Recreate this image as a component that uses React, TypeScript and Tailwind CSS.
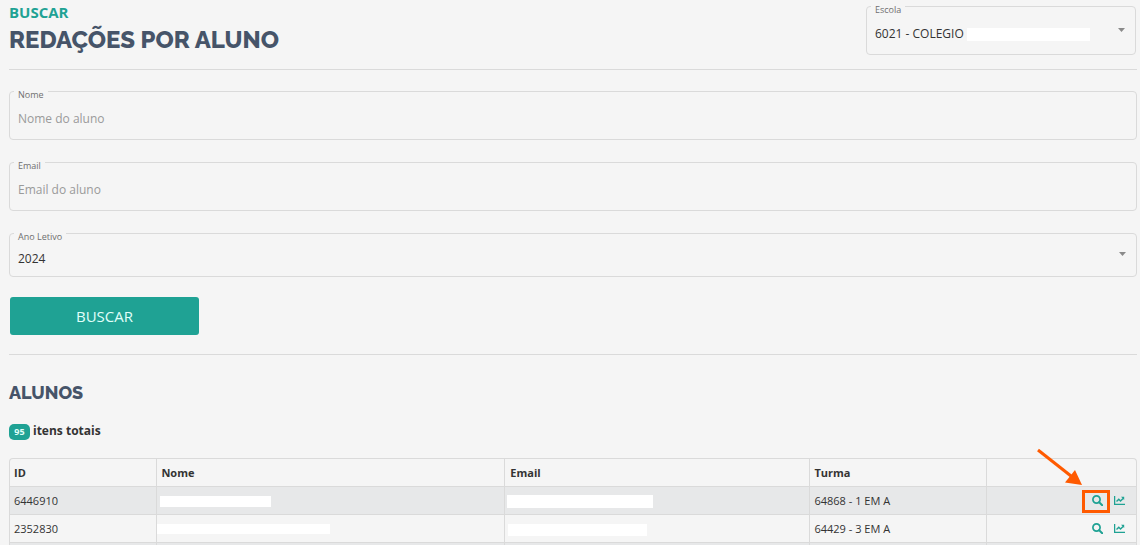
import React from 'react';

const LABEL =
  'absolute left-[5px] -top-px z-10 bg-[#f5f5f5] px-1 text-[9px] leading-[10px] text-[#6f6f6f]';

function Caret() {
  return (
    <svg
      className="pointer-events-none absolute right-[11px] top-1/2 -mt-[3px]"
      width="7"
      height="4"
      viewBox="0 0 7 4"
      aria-hidden="true"
    >
      <path d="M0 0h7L3.500 4z" fill="#8a8a8a" />
    </svg>
  );
}

function TextField({ id, label, placeholder }: { id: string; label: string; placeholder: string }) {
  return (
    <div className="relative">
      <label htmlFor={id} className={LABEL}>
        {label}
      </label>
      <input
        id={id}
        type="text"
        placeholder={placeholder}
        className="block h-[49px] w-full rounded border border-[#dadada] bg-transparent px-2 pt-1.5 text-xs text-[#333] outline-none placeholder:text-[#9a9a9a] placeholder:opacity-100"
      />
    </div>
  );
}

function SearchIcon() {
  return (
    <svg width="11" height="11" viewBox="0 0 11 11" fill="none" stroke="#1fa294" aria-hidden="true">
      <circle cx="4.500" cy="4.500" r="3.600" strokeWidth="1.700" />
      <path d="M7.200 7.200l3 3" strokeWidth="2" strokeLinecap="round" />
    </svg>
  );
}

function ChartIcon() {
  return (
    <svg width="11" height="9" viewBox="0 0 11 9" fill="none" stroke="#1fa294" aria-hidden="true">
      <path d="M.6 0v8.300H11" strokeWidth="1.300" />
      <path d="M2.500 5.600l2.300-2.300 1.700 1.700 2.600-2.600" strokeWidth="1.400" />
      <path d="M7 .7h3.200v3.200z" fill="#1fa294" stroke="none" />
    </svg>
  );
}

function Pointer() {
  return (
    <svg
      className="pointer-events-none absolute bottom-full right-0 mb-[7px] mr-[23px]"
      width="48"
      height="38"
      viewBox="0 0 48 38"
      aria-hidden="true"
    >
      <path d="M2 2l33 26" stroke="#ff5a00" strokeWidth="3" />
      <path d="M46 37L39 22L29 34.500z" fill="#ff5a00" />
    </svg>
  );
}

const students = [
  { id: '6446910', turma: '64868 - 1 EM A', name: 'ml-[3px] mt-[2px] h-[11px] w-[111px]', email: 'ml-[2px] mt-[2px] h-[13px] w-[146px]', marked: true },
  { id: '2352830', turma: '64429 - 3 EM A', name: 'h-[10px] w-[173px]', email: 'ml-[3px] mt-[2px] h-[12px] w-[139px]', marked: false },
  { id: '', turma: '', name: '', email: '', marked: false },
];

const CELL = 'h-7 border-t border-[#dadada] px-1';

export default function App() {
  return (
    <div className="h-screen overflow-hidden bg-[#f5f5f5] pl-[9px] pr-[3px] font-['Open_Sans',sans-serif] text-[#333]">
      <header className="flex items-start justify-between border-b border-[#dadada] pb-[13px] pr-px pt-[6px]">
        <div>
          <p className="text-[15px] font-bold leading-3 text-[#1fa294]">BUSCAR</p>
          <h1 className="mt-1.5 font-['Raleway','Lato',sans-serif] text-2xl font-extrabold leading-8 text-[#465469]">
            REDAÇÕES POR ALUNO
          </h1>
        </div>
        <div className="relative w-[270px]">
          <label htmlFor="escola" className={LABEL}>
            Escola
          </label>
          <select
            id="escola"
            className="block h-[49px] w-full appearance-none rounded border border-[#dadada] bg-transparent px-2 pt-1.5 text-xs outline-none"
          >
            <option>6021 - COLEGIO</option>
          </select>
          <span className="pointer-events-none absolute left-[101px] top-[22px] h-[13px] w-[123px] bg-white" />
          <Caret />
        </div>
      </header>

      <form className="border-b border-[#dadada] pb-[19px] pt-[21px]" onSubmit={(e) => e.preventDefault()}>
        <div className="flex flex-col gap-[22px]">
          <TextField id="nome" label="Nome" placeholder="Nome do aluno" />
          <TextField id="email" label="Email" placeholder="Email do aluno" />
          <div className="relative">
            <label htmlFor="ano" className={LABEL}>
              Ano Letivo
            </label>
            <select
              id="ano"
              className="block h-11 w-full appearance-none rounded border border-[#dadada] bg-transparent px-2 pt-2 text-xs outline-none"
            >
              <option>2024</option>
            </select>
            <Caret />
          </div>
        </div>
        <button
          type="submit"
          className="ml-px mt-5 block h-[38px] w-[189px] rounded-[3px] bg-[#1fa294] text-[15px] text-[#e0fffa]"
        >
          BUSCAR
        </button>
      </form>

      <section className="pt-[26px]">
        <h2 className="font-['Raleway','Lato',sans-serif] text-lg font-extrabold leading-6 text-[#465469]">ALUNOS</h2>
        <p className="mt-4 flex items-center gap-[3px] text-xs font-bold leading-5">
          <span className="mt-0.5 flex h-4 w-[21px] items-center justify-center rounded-[5px] bg-[#1fa294] text-[9px] text-[#e0fffa]">
            95
          </span>
          itens totais
        </p>

        <div className="mt-[17px] rounded-t border-x border-t border-[#dadada]">
          <table className="w-full table-fixed border-separate border-spacing-0 text-[11px] leading-4">
            <colgroup>
              <col className="w-[13%]" />
              <col className="w-[30.9%]" />
              <col className="w-[27.1%]" />
              <col className="w-[15.7%]" />
              <col />
            </colgroup>
            <thead>
              <tr className="text-left">
                <th className="h-[27px] px-1">ID</th>
                <th className="border-l border-[#dadada] px-1">Nome</th>
                <th className="border-l border-[#dadada] px-[5px]">Email</th>
                <th className="border-l border-[#dadada] px-1">Turma</th>
                <th className="border-l border-[#dadada] px-1" aria-label="Ações" />
              </tr>
            </thead>
            <tbody>
              {students.map((s, i) => (
                <tr key={i} className="odd:bg-[#e7e8e9]">
                  <td className={CELL}>{s.id}</td>
                  <td className="border-l border-t border-[#dadada]">
                    <span className={`block bg-white ${s.name}`} />
                  </td>
                  <td className="border-l border-t border-[#dadada]">
                    <span className={`block bg-white ${s.email}`} />
                  </td>
                  <td className={`${CELL} border-l`}>{s.turma}</td>
                  <td className="relative border-l border-t border-[#dadada] pr-[11px]">
                    {s.id && (
                      <div className="flex items-center justify-end gap-[11px]">
                        <a href="#buscar" aria-label="Ver redações">
                          <SearchIcon />
                        </a>
                        <a href="#desempenho" aria-label="Ver desempenho">
                          <ChartIcon />
                        </a>
                      </div>
                    )}
                    {s.marked && (
                      <div className="pointer-events-none absolute right-[26px] top-[3px] h-[23px] w-[28px] border-[3px] border-[#ff5a00]">
                        <Pointer />
                      </div>
                    )}
                  </td>
                </tr>
              ))}
            </tbody>
          </table>
        </div>
      </section>
    </div>
  );
}
